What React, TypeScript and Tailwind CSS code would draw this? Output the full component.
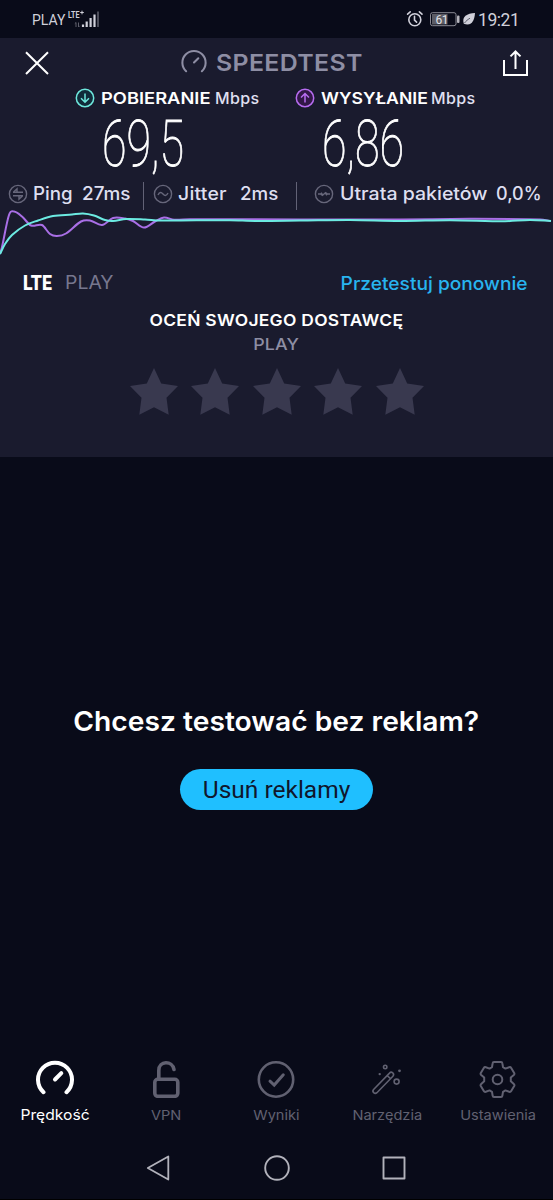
import type { ReactNode } from "react";
import clsx from "clsx";

type Point = [number, number];

const DOWNLOAD_POINTS: Point[] = [
  [0, 254], [5, 244], [12, 235], [25, 225.5], [38, 220.5], [53, 216], [72, 214.5], [83, 213.5],
  [94, 215.5], [105, 220], [113, 221], [126, 219], [145, 219.5], [160, 220.5], [230, 220.2],
  [255, 221], [300, 220.6], [350, 220], [400, 221], [450, 220.2], [505, 221.2], [530, 220], [551, 221],
];

const UPLOAD_POINTS: Point[] = [
  [0, 254], [2, 247], [9, 215], [14, 211.5], [22, 216.5], [31, 225.5], [42, 225], [50, 234],
  [57, 236], [66, 233.5], [81, 221.5], [90, 220.5], [102, 225], [113, 218], [125, 218.5],
  [133, 221], [144, 227.5], [155, 221.5], [164, 217.5], [174, 219.8], [190, 219.2],
  [300, 219.5], [400, 219.5], [470, 218.8], [540, 219.4], [551, 221],
];

function smoothPath(points: Point[]) {
  let d = `M${points[0][0]} ${points[0][1]}`;
  for (let i = 0; i < points.length - 1; i++) {
    const p0 = points[Math.max(i - 1, 0)];
    const p1 = points[i];
    const p2 = points[i + 1];
    const p3 = points[Math.min(i + 2, points.length - 1)];
    const third = (p2[0] - p1[0]) / 3;
    const m1 = (p2[1] - p0[1]) / (p2[0] - p0[0]);
    const m2 = (p3[1] - p1[1]) / (p3[0] - p1[0]);
    d += ` C${p1[0] + third} ${p1[1] + m1 * third} ${p2[0] - third} ${p2[1] - m2 * third} ${p2[0]} ${p2[1]}`;
  }
  return d;
}

function StatusBar() {
  return (
    <div className="flex h-[38px] items-center pl-8 font-['Roboto'] text-[#d0d0da]">
      <span className="w-[35px] pt-[2px] text-[14px] whitespace-nowrap">PLAY</span>
      <svg className="h-5 w-[34px] shrink-0" viewBox="67 9 34 20">
        <text x="68" y="18.2" fontSize="9.5" fontWeight="700" textLength="11.5" lengthAdjust="spacingAndGlyphs" fill="currentColor">LTE</text>
        <path d="M80.2 12.5h3.6M82 10.700v3.600" stroke="currentColor" strokeWidth="1" />
        <path d="M76 27v-4.5l-1.2 1.2M78.5 22.5V27l1.2-1.2" stroke="#60606d" strokeWidth="1" fill="none" />
        <path d="M83 24.5V27M86.7 21.5V27M90.6 18V27M94.5 14.5V27" stroke="currentColor" strokeWidth="2.2" />
        <path d="M98 11.5V27" stroke="#555562" strokeWidth="1.8" />
      </svg>
      <svg className="ml-[305px] h-5 w-[71px] shrink-0" viewBox="406 9 71 20">
        <g fill="none" stroke="currentColor" strokeWidth="1.6" strokeLinecap="round">
          <circle cx="414.8" cy="19.8" r="6" />
          <path d="M414.5 16.4v3.7l2.1 2M407.6 14.2l2.6-2.3M419.4 11.9l2.6 2.3" />
        </g>
        <rect x="430.5" y="12.7" width="25.5" height="13" rx="2" fill="none" stroke="#8b8b95" />
        <rect x="432" y="14" width="15.5" height="10.5" fill="#5c5c65" />
        <rect x="457" y="15.5" width="2.5" height="7.5" rx="1" fill="#b5b5bd" />
        <text x="435.6" y="23.7" fontSize="12" fill="#e2e2e8" textLength="13">61</text>
        <path d="M475 13C467 13.5 461.5 16.5 463.8 23.8C472.5 26.5 474.5 19.5 475 13Z" fill="currentColor" />
        <path d="M464.5 23C466 21 467.5 19.7 470 18.2" fill="none" stroke="#090b19" strokeWidth="0.6" />
      </svg>
      <span className="ml-[1px] pt-[2px] text-[17.5px] tracking-[-0.45px] whitespace-nowrap">19:21</span>
    </div>
  );
}

function Gauge({ className, strokeWidth }: { className?: string; strokeWidth: number }) {
  return (
    <svg className={className} viewBox="0 0 38 36" fill="none" stroke="currentColor" strokeWidth={strokeWidth} strokeLinecap="round">
      <path d="M7.5 32.2A17 17 0 1 1 30.5 32.2" />
      <path d="M19 19.5 25.3 13.2" />
    </svg>
  );
}

function Header() {
  return (
    <header className="flex h-[50px] items-center pl-6 text-white">
      <svg className="h-[26px] w-[26px] shrink-0" viewBox="0 0 26 26" stroke="currentColor" strokeWidth="2">
        <path d="M2 2.2 24 24M24 2.2 2 24" />
      </svg>
      <Gauge className="mb-1 ml-[131px] h-[25px] w-[26px] shrink-0 text-[#8e8ea4]" strokeWidth={3} />
      <span className="ml-[9px] w-[150px] origin-left scale-x-[1.06] text-[23.5px] font-semibold tracking-[0.3px] text-[#8e8ea4]">SPEEDTEST</span>
      <svg className="ml-[137px] h-[26px] w-[25px] shrink-0" viewBox="0 0 25 26" fill="none" stroke="currentColor" strokeWidth="2">
        <path d="M1 10V25H24V10M12.5 19V2M7.5 6.4 12.5 1.5 17.5 6.4" />
      </svg>
    </header>
  );
}

function SpeedLabel({ label, className, up }: { label: string; className: string; up?: boolean }) {
  return (
    <div className={clsx("flex items-center", className)}>
      <svg
        className={clsx("h-5 w-5 shrink-0", up ? "text-[#b76cf0]" : "text-[#6ee8dd]")}
        viewBox="0 0 20 20"
        fill="none"
        stroke="currentColor"
        strokeWidth="1.5"
      >
        <circle cx="10" cy="10" r="8.7" fill={up ? "#321747" : "#102b39"} />
        <path d={up ? "M10 14.4V5.8M6 9.5 10 5.5 14 9.5" : "M10 5.4V14M6 10.3 10 14.3 14 10.3"} />
      </svg>
      <span
        className={clsx(
          "ml-[6px] origin-left text-[16px] font-semibold whitespace-nowrap text-white",
          up ? "w-[110px] scale-x-[1.1]" : "w-[114px] scale-x-[1.145]"
        )}
      >
        {label}
      </span>
      <span className="text-[16px] font-medium tracking-[0.4px] whitespace-nowrap text-[#e0e0f2]">Mbps</span>
    </div>
  );
}

function SpeedValue({ children, className }: { children: ReactNode; className: string }) {
  return (
    <div className={clsx("origin-left scale-x-[0.7] font-['Roboto'] text-[64px] leading-[74px] font-thin whitespace-nowrap text-white [-webkit-text-stroke:0.9px_white]", className)}>
      {children}
    </div>
  );
}

function StatIcon({ d }: { d: string }) {
  return (
    <svg className="h-5 w-5 shrink-0" viewBox="0 0 20 20" fill="none" stroke="#67677b" strokeWidth="1.4">
      <circle cx="10" cy="10" r="8.6" />
      <path d={d} />
    </svg>
  );
}

function Stats() {
  return (
    <div className="flex h-7 items-center pb-[5px] pl-2 text-[18px] font-medium whitespace-nowrap text-[#dedff0]">
      <StatIcon d="M5 8.3H15M5.3 8.2 9 4.8V8M15 11.7H5M14.7 11.8 11 15.2V12" />
      <span className="ml-[5px] w-[49px] origin-left scale-x-[1.04]">Ping</span>
      <span className="w-[61px] origin-left scale-x-[1.05]">27ms</span>
      <span className="h-7 w-px self-start bg-[#626276]" />
      <span className="ml-[9px] flex">
        <StatIcon d="M5 11C6.7 7.5 8.3 8 10 10S13.3 12.5 15 9" />
      </span>
      <span className="ml-[5px] w-[62px] origin-left scale-x-[1.08] tracking-[0.2px]">Jitter</span>
      <span className="w-[56px] origin-left scale-x-[1.04]">2ms</span>
      <span className="h-7 w-px self-start bg-[#626276]" />
      <span className="ml-[17px] flex">
        <StatIcon d="M4 10H8M8 11.8 12 8.2M12 10H16M7.2 8.7 8 10 7.2 11.3M12.8 8.7 12 10 12.8 11.3" />
      </span>
      <span className="ml-[6px] w-[156px] origin-left scale-x-[1.085]">Utrata pakietów</span>
      <span>0,0%</span>
    </div>
  );
}

function Rating() {
  return (
    <div className="mt-[13px] flex flex-col items-center">
      <p className="scale-x-[1.09] text-[16px] leading-6 font-semibold tracking-[0.25px] text-white">OCEŃ SWOJEGO DOSTAWCĘ</p>
      <p className="scale-x-[1.08] text-[16.5px] leading-6 font-medium tracking-[0.1px] text-[#8e8ea4]">PLAY</p>
      <div className="mt-3 flex gap-[13.5px]">
        {[0, 1, 2, 3, 4].map((star) => (
          <svg key={star} className="h-12 w-12" viewBox="0 0 48 48" fill="#39394f">
            <path d="M24 0 31.2 15.4 48 18 36.5 29.7 38.7 46.8 24 39.2 9.3 46.8 11.5 29.7 0 18 16.8 15.4Z" />
          </svg>
        ))}
      </div>
    </div>
  );
}

function ResultPanel() {
  return (
    <section className="h-[419px] bg-[#1a1b2e]">
      <Header />
      <div className="flex h-5">
        <SpeedLabel label="POBIERANIE" className="ml-[75px] w-[220px]" />
        <SpeedLabel label="WYSYŁANIE" className="" up />
      </div>
      <div className="flex h-[74px]">
        <SpeedValue className="ml-[102px] w-[220px]">69,5</SpeedValue>
        <SpeedValue className="">6,86</SpeedValue>
      </div>
      <Stats />
      <svg className="-mt-[4px] block h-[54px] w-[553px]" viewBox="0 206 553 54" fill="none" strokeWidth="2">
        <path d={smoothPath(UPLOAD_POINTS)} stroke="#a96fe6" />
        <path d={smoothPath(DOWNLOAD_POINTS)} stroke="#6cebe2" />
      </svg>
      <div className="mt-[11px] flex h-6 items-center whitespace-nowrap">
        <span className="ml-[23px] w-[42px] origin-left scale-x-[0.88] font-['Roboto'] text-[20px] font-black text-white">LTE</span>
        <span className="origin-left scale-x-[1.05] text-[18.5px] text-[#77778e]">PLAY</span>
        <a className="mr-[25px] ml-auto origin-right scale-x-[1.065] text-[18px] font-medium text-[#28b4ef]">Przetestuj ponownie</a>
      </div>
      <Rating />
    </section>
  );
}

function AdPrompt() {
  return (
    <section className="flex h-[601px] flex-col items-center pt-[247px]">
      <h2 className="scale-x-[1.045] text-[27px] leading-9 font-semibold whitespace-nowrap text-white">Chcesz testować bez reklam?</h2>
      <button type="button" className="mt-[29px] h-[41px] w-[193px] rounded-full bg-[#1fbfff] pt-px font-['Roboto'] text-[24.5px] whitespace-nowrap text-[#10162c]">
        Usuń reklamy
      </button>
    </section>
  );
}

const TABS = [
  { label: "Prędkość", icon: <Gauge className="h-9 w-[38px]" strokeWidth={4} /> },
  {
    label: "VPN",
    icon: (
      <svg className="h-[38px] w-[38px]" viewBox="0 0 38 38" fill="none" stroke="currentColor" strokeWidth="3.6" strokeLinecap="round">
        <rect x="7.8" y="19.3" width="23" height="17" rx="3" />
        <path d="M11.8 19V10.5C11.8 .3 25.5.5 27 9.5" />
      </svg>
    ),
  },
  {
    label: "Wyniki",
    icon: (
      <svg className="h-[38px] w-[38px]" viewBox="0 0 38 38" fill="none" stroke="currentColor" strokeWidth="2.6" strokeLinecap="round">
        <circle cx="19" cy="19.5" r="17.2" />
        <path d="M13 21.2 17.2 25 26.3 14.8" strokeWidth="3" />
      </svg>
    ),
  },
  {
    label: "Narzędzia",
    icon: (
      <svg className="h-[38px] w-[38px]" viewBox="0 0 38 38" fill="none" stroke="currentColor" strokeWidth="1.6" strokeLinecap="round">
        <path d="M5.6 29.5 21.5 13.1A2.3 2.3 0 0 1 24.9 16.2L8.9 32.7A2.3 2.3 0 0 1 5.6 29.5ZM19.2 15.6 22.4 18.5" />
        <circle cx="17.2" cy="7" r="1.7" />
        <circle cx="28.6" cy="21.6" r="2.5" />
        <circle cx="31.5" cy="10.8" r="1.4" fill="currentColor" stroke="none" />
        <circle cx="11.7" cy="14.1" r="1.2" fill="currentColor" stroke="none" />
      </svg>
    ),
  },
  {
    label: "Ustawienia",
    icon: (
      <svg className="mr-[2px] h-[38px] w-[38px]" viewBox="0 0 38 38" fill="none" stroke="currentColor" strokeWidth="2" strokeLinejoin="round">
        <path d="M16 2H23Q24.2 2 24.4 3.5L25 7.2 27.4 8.6 31.2 7.2Q32.5 6.8 33.2 8L36.2 13Q36.8 14.1 35.8 15L32.8 17.5V21.3L35.8 24Q36.8 24.9 36.2 26L33.2 31Q32.5 32.2 31.2 31.8L27.4 30.4 25 31.8 24.4 35.5Q24.2 37 23 37H16Q14.8 37 14.6 35.5L14 31.8 11.6 30.4 7.8 31.8Q6.5 32.2 5.8 31L2.8 26Q2.2 24.9 3.2 24L6.2 21.3V17.5L3.2 15Q2.2 14.1 2.8 13L5.8 8Q6.5 6.8 7.8 7.2L11.6 8.6 14 7.2 14.6 3.5Q14.8 2 16 2Z" />
        <circle cx="19.5" cy="19.5" r="4.8" />
      </svg>
    ),
  },
];

function TabBar() {
  return (
    <nav className="grid h-[80px] grid-cols-5">
      {TABS.map((tab, index) => (
        <div
          key={tab.label}
          className={clsx("flex flex-col items-center pt-[2px]", index === 0 ? "text-white" : "text-[#616171]")}
        >
          <span className="flex h-[44px] items-start">{tab.icon}</span>
          <span
            className={clsx(
              "scale-x-[1.08] leading-[22px] whitespace-nowrap",
              index === 0 ? "text-[14.5px]" : "text-[13.5px]"
            )}
          >
            {tab.label}
          </span>
        </div>
      ))}
    </nav>
  );
}

function AndroidNav() {
  return (
    <div className="flex h-[62px] items-center justify-center gap-[89px] border-b border-black pb-[1px] text-[#b2b2bb]">
      <svg className="h-7 w-7" viewBox="0 0 28 28" fill="none" stroke="currentColor" strokeWidth="1.8" strokeLinejoin="round">
        <path d="M22.3 2.5V25.5L1.8 14Z" />
      </svg>
      <svg className="h-7 w-7" viewBox="0 0 28 28" fill="none" stroke="currentColor" strokeWidth="1.9">
        <circle cx="14" cy="14" r="11.8" />
      </svg>
      <svg className="h-7 w-7" viewBox="0 0 28 28" fill="none" stroke="currentColor" strokeWidth="1.9" strokeLinejoin="round">
        <rect x="3.5" y="3.5" width="21" height="21" />
      </svg>
    </div>
  );
}

export default function App() {
  return (
    <div className="h-[1200px] w-[553px] overflow-hidden bg-[#090b19] font-['Inter',sans-serif]">
      <StatusBar />
      <ResultPanel />
      <AdPrompt />
      <TabBar />
      <AndroidNav />
    </div>
  );
}
